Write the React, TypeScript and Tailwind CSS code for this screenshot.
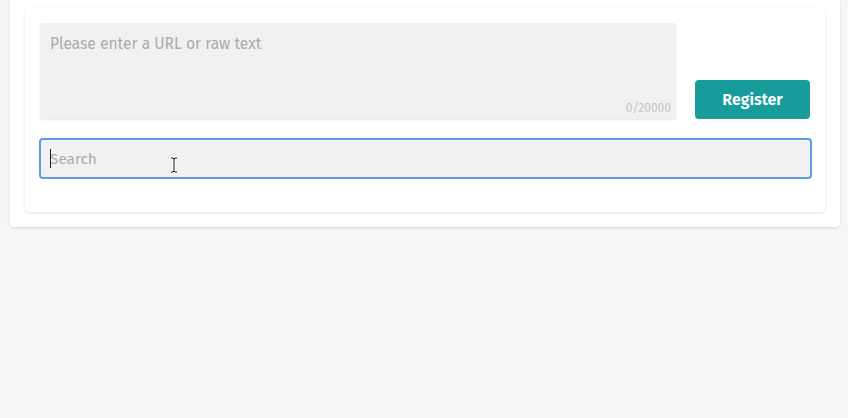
import React, { useState } from 'react';

const font = { fontFamily: '"Fira Sans", "Noto Sans", "Open Sans", sans-serif' };

function Counter({ value, max }: { value: number; max: number }) {
  return (
    <span className="absolute right-[5px] bottom-[5px] text-[12px] leading-none text-[#c4c4c4]">
      {value}/{max}
    </span>
  );
}

export default function App() {
  const [text, setText] = useState('');
  const [search, setSearch] = useState('');

  return (
    <div className="min-h-[418px] w-full bg-[#f6f6f6]" style={font}>
      <div className="ml-[10px] mr-[8px] rounded-b-[4px] bg-white px-[15px] pt-[8px] pb-[15px] shadow-[0_1px_3px_rgba(0,0,0,0.12)]">
        <div className="rounded-[4px] bg-white px-[15px] pt-[15px] pb-[33px] shadow-[0_1px_3px_rgba(0,0,0,0.12)]">
          <div className="flex items-end gap-[19px]">
            <div className="relative flex-1">
              <textarea
                className="block h-[96px] w-full resize-none rounded-[3px] bg-[#f1f1f1] px-[10px] pt-[11px] pb-[10px] text-[15.6px] leading-[20px] text-[#333] shadow-[0_1px_2px_rgba(0,0,0,0.1)] outline-none placeholder:text-[#ababab]"
                placeholder="Please enter a URL or raw text"
                value={text}
                onChange={(e) => setText(e.target.value.slice(0, 20000))}
              />
              <Counter value={text.length} max={20000} />
            </div>
            <button className="h-[39px] w-[115px] rounded-[4px] bg-[#179b9b] pt-px text-[16px] font-semibold text-white">
              Register
            </button>
          </div>
          <div className="relative mt-[19px]">
            <input
              className="block h-[41px] w-[773px] -ml-px rounded-[4px] border-2 border-[#5e9de6] bg-[#f1f1f1] px-[9px] pt-px text-[15.4px] text-[#333] outline-none placeholder:text-[#ababab]"
              placeholder="Search"
              value={search}
              onChange={(e) => setSearch(e.target.value)}
            />
            {/* text caret */}
            <span className="pointer-events-none absolute left-[10px] top-[11px] h-[19px] w-px bg-[#222]" />
            {/* mouse pointer over the field */}
            <svg className="pointer-events-none absolute left-[130px] top-[19px]" width="8" height="16" viewBox="0 0 8 16">
              <path d="M1 1h2l1 1 1-1h2M4 2v12M1 15h2l1-1 1 1h2" stroke="#fff" strokeWidth="3" fill="none" />
              <path d="M1 1h2l1 1 1-1h2M4 2v12M1 15h2l1-1 1 1h2" stroke="#111" strokeWidth="1" fill="none" />
            </svg>
          </div>
        </div>
      </div>
    </div>
  );
}
